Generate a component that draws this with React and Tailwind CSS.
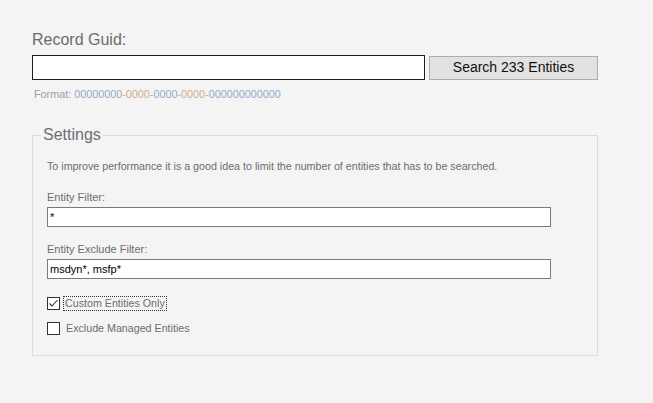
export default function App() {
  const font = { fontFamily: '"Liberation Sans", Arial, sans-serif' };
  return (
    <div className="w-[653px] h-[403px] bg-[#f4f4f4] pl-[32px] pt-[31px]" style={font}>
      <div className="text-[16px] leading-[18px] text-[#6b6b6b]">Record Guid:</div>
      <div className="flex items-center gap-[4px] mt-[6px]">
        <input className="w-[393px] h-[25px] bg-white border border-[#1e1e1e] outline-none px-1 text-[12px]" />
        <button className="w-[169px] h-[24px] bg-[#e1e1e1] border border-[#adadad] text-[14px] text-[#111]">
          Search 233 Entities
        </button>
      </div>
      <div className="mt-[7px] ml-[2px] text-[10.8px] leading-[14px]">
        <span className="text-[#a0a0a0]">Format: </span>
        <span className="text-[#8fa9cc]">00000000</span>
        <span className="text-[#d2aa86]">-0000-</span>
        <span className="text-[#8fa9cc]">0000</span>
        <span className="text-[#d2aa86]">-0000-</span>
        <span className="text-[#8fa9cc]">000000000000</span>
      </div>

      {/* Settings */}
      <fieldset className="w-[566px] h-[230px] mt-[25px] border border-[#dcdcdc] pl-[8px]">
        <legend className="text-[16px] leading-[18px] text-[#6e6e6e] px-[2px]">Settings</legend>
        <div className="pl-[6px]">
          <p className="mt-[15px] text-[10.7px] leading-[14px] text-[#6d6d6d]">
            To improve performance it is a good idea to limit the number of entities that has to be searched.
          </p>
          <div className="mt-[17px] text-[11px] leading-[14px] text-[#6d6d6d]">Entity Filter:</div>
          <input
            defaultValue="*"
            className="mt-[3px] block w-[504px] h-[20px] bg-white border border-[#7a7a7a] outline-none px-[2px] text-[11px] text-black"
          />
          <div className="mt-[15px] text-[11px] leading-[14px] text-[#6d6d6d]">Entity Exclude Filter:</div>
          <input
            defaultValue="msdyn*, msfp*"
            className="mt-[3px] block w-[504px] h-[20px] bg-white border border-[#7a7a7a] outline-none px-[2px] text-[11px] text-black"
          />
          <div className="mt-[18px] flex items-center gap-[4px]">
            <span className="w-[13px] h-[13px] border border-[#333] bg-white flex items-center justify-center">
              <svg width="11" height="11" viewBox="0 0 11 11">
                <path d="M1.5 5.5 L4 8 L9.5 2" fill="none" stroke="#333" strokeWidth="1.1" />
              </svg>
            </span>
            <span className="text-[10.7px] leading-[13px] text-[#6d6d6d] outline outline-1 outline-dotted outline-[#333] px-[1px]">
              Custom Entities Only
            </span>
          </div>
          <div className="mt-[12px] flex items-center gap-[6px]">
            <span className="w-[13px] h-[13px] border border-[#333] bg-white" />
            <span className="text-[10.7px] leading-[13px] text-[#6d6d6d]">Exclude Managed Entities</span>
          </div>
        </div>
      </fieldset>
    </div>
  );
}
